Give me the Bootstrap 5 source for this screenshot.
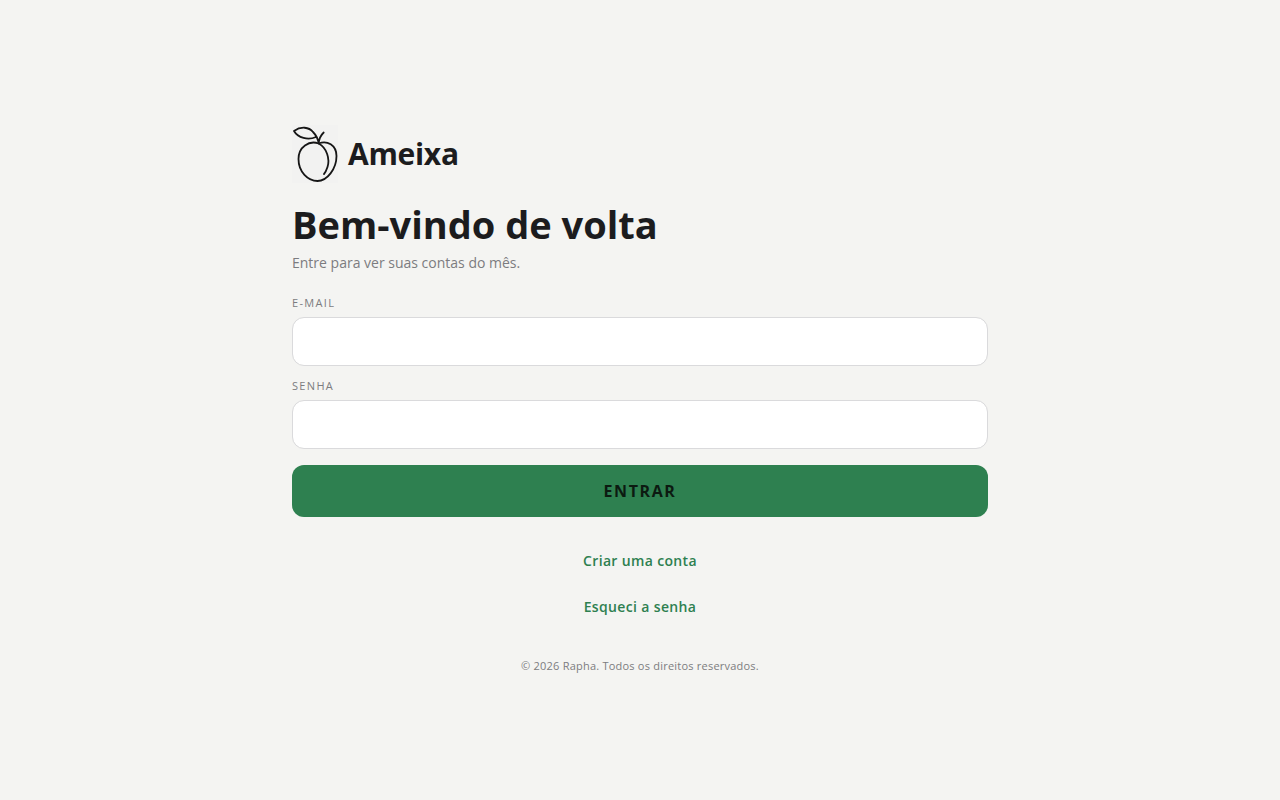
<!DOCTYPE html>
<html lang="pt-BR">
<head>
<meta charset="utf-8">
<meta name="viewport" content="width=device-width, initial-scale=1">
<title>Ameixa</title>
<link href="https://cdn.jsdelivr.net/npm/bootstrap@5.3.0/dist/css/bootstrap.min.css" rel="stylesheet">
<script src="https://cdn.jsdelivr.net/npm/bootstrap@5.3.0/dist/js/bootstrap.bundle.min.js" defer></script>
<style>
body { background: #f4f4f2; color: #1c1c1e; font-family: "Open Sans", sans-serif; }
.login { max-width: 720px; }
.brand { gap: 10px; }
.brand-icon { width: 46px; height: 60px; }
.brand-name { font-size: 30px; line-height: 40px; letter-spacing: -.01em; }
.title { font-size: 38px; line-height: 48px; }
.subtitle { font-size: 14px; line-height: 21px; margin-bottom: 22px; color: #7c7c80; }
.field-label { font-size: 11px; line-height: 16px; letter-spacing: .12em; margin-bottom: 6px; color: #7c7c80; }
.field { height: 49px; border: 1px solid #dadadc; border-radius: 12px; }
.field + .field-label { margin-top: 12px; }
.submit { height: 52px; border-radius: 12px; background: #2e8050; color: #0c1a11; font-size: 16px; letter-spacing: .1em; }
.submit:hover { background: #286f45; }
.links { margin-top: 21px; }
.text-link { padding: 13px; font-size: 14px; line-height: 20px; letter-spacing: .025em; color: #2e8050; }
.copyright { margin-top: 28px; padding-bottom: 2px; font-size: 11px; line-height: 16px; letter-spacing: .02em; color: #7c7c80; }
</style>
</head>
<body>
<main class="login container d-flex flex-column justify-content-center min-vh-100">
  <div class="brand d-flex align-items-center mb-3">
    <svg class="brand-icon" viewBox="0 -1 46 60" fill="none" stroke="#161616" stroke-width="1.8" stroke-linecap="round" stroke-linejoin="round" aria-hidden="true">
      <path d="M0 0H46V58H0Z" fill="#f2f2f1" stroke="none"/>
      <path d="M2 6C9 1 17 2 21 7C24 10 26 14 26.7 18.5M2 6C6 13 16 15.5 24 12M26.7 18.5C27 14 29 10 31.7 7.5"/>
      <path d="M26.7 18.5C17 15 6.500 22 6.500 34C6.500 47 16 56 25.500 56C35 56 44.500 44 44.500 31C44.500 20 35 15 26.700 18.500C35 23 38 34 35.500 42C34.500 45 33.500 47.500 32 49"/>
    </svg>
    <span class="brand-name fw-bold">Ameixa</span>
  </div>
  <h1 class="title fw-bold mb-1">Bem-vindo de volta</h1>
  <p class="subtitle">Entre para ver suas contas do mês.</p>
  <form>
    <label class="field-label d-block" for="email">E-MAIL</label>
    <input class="field form-control" type="email" id="email">
    <label class="field-label d-block" for="senha">SENHA</label>
    <input class="field form-control" type="password" id="senha">
    <button class="submit btn w-100 fw-bold mt-3" type="submit">ENTRAR</button>
  </form>
  <nav class="links d-flex flex-column align-items-center">
    <a class="text-link fw-semibold text-decoration-none" href="#criar">Criar uma conta</a>
    <a class="text-link fw-semibold text-decoration-none" href="#recuperar">Esqueci a senha</a>
  </nav>
  <footer class="copyright text-center">© 2026 Rapha. Todos os direitos reservados.</footer>
</main>
</body>
</html>
